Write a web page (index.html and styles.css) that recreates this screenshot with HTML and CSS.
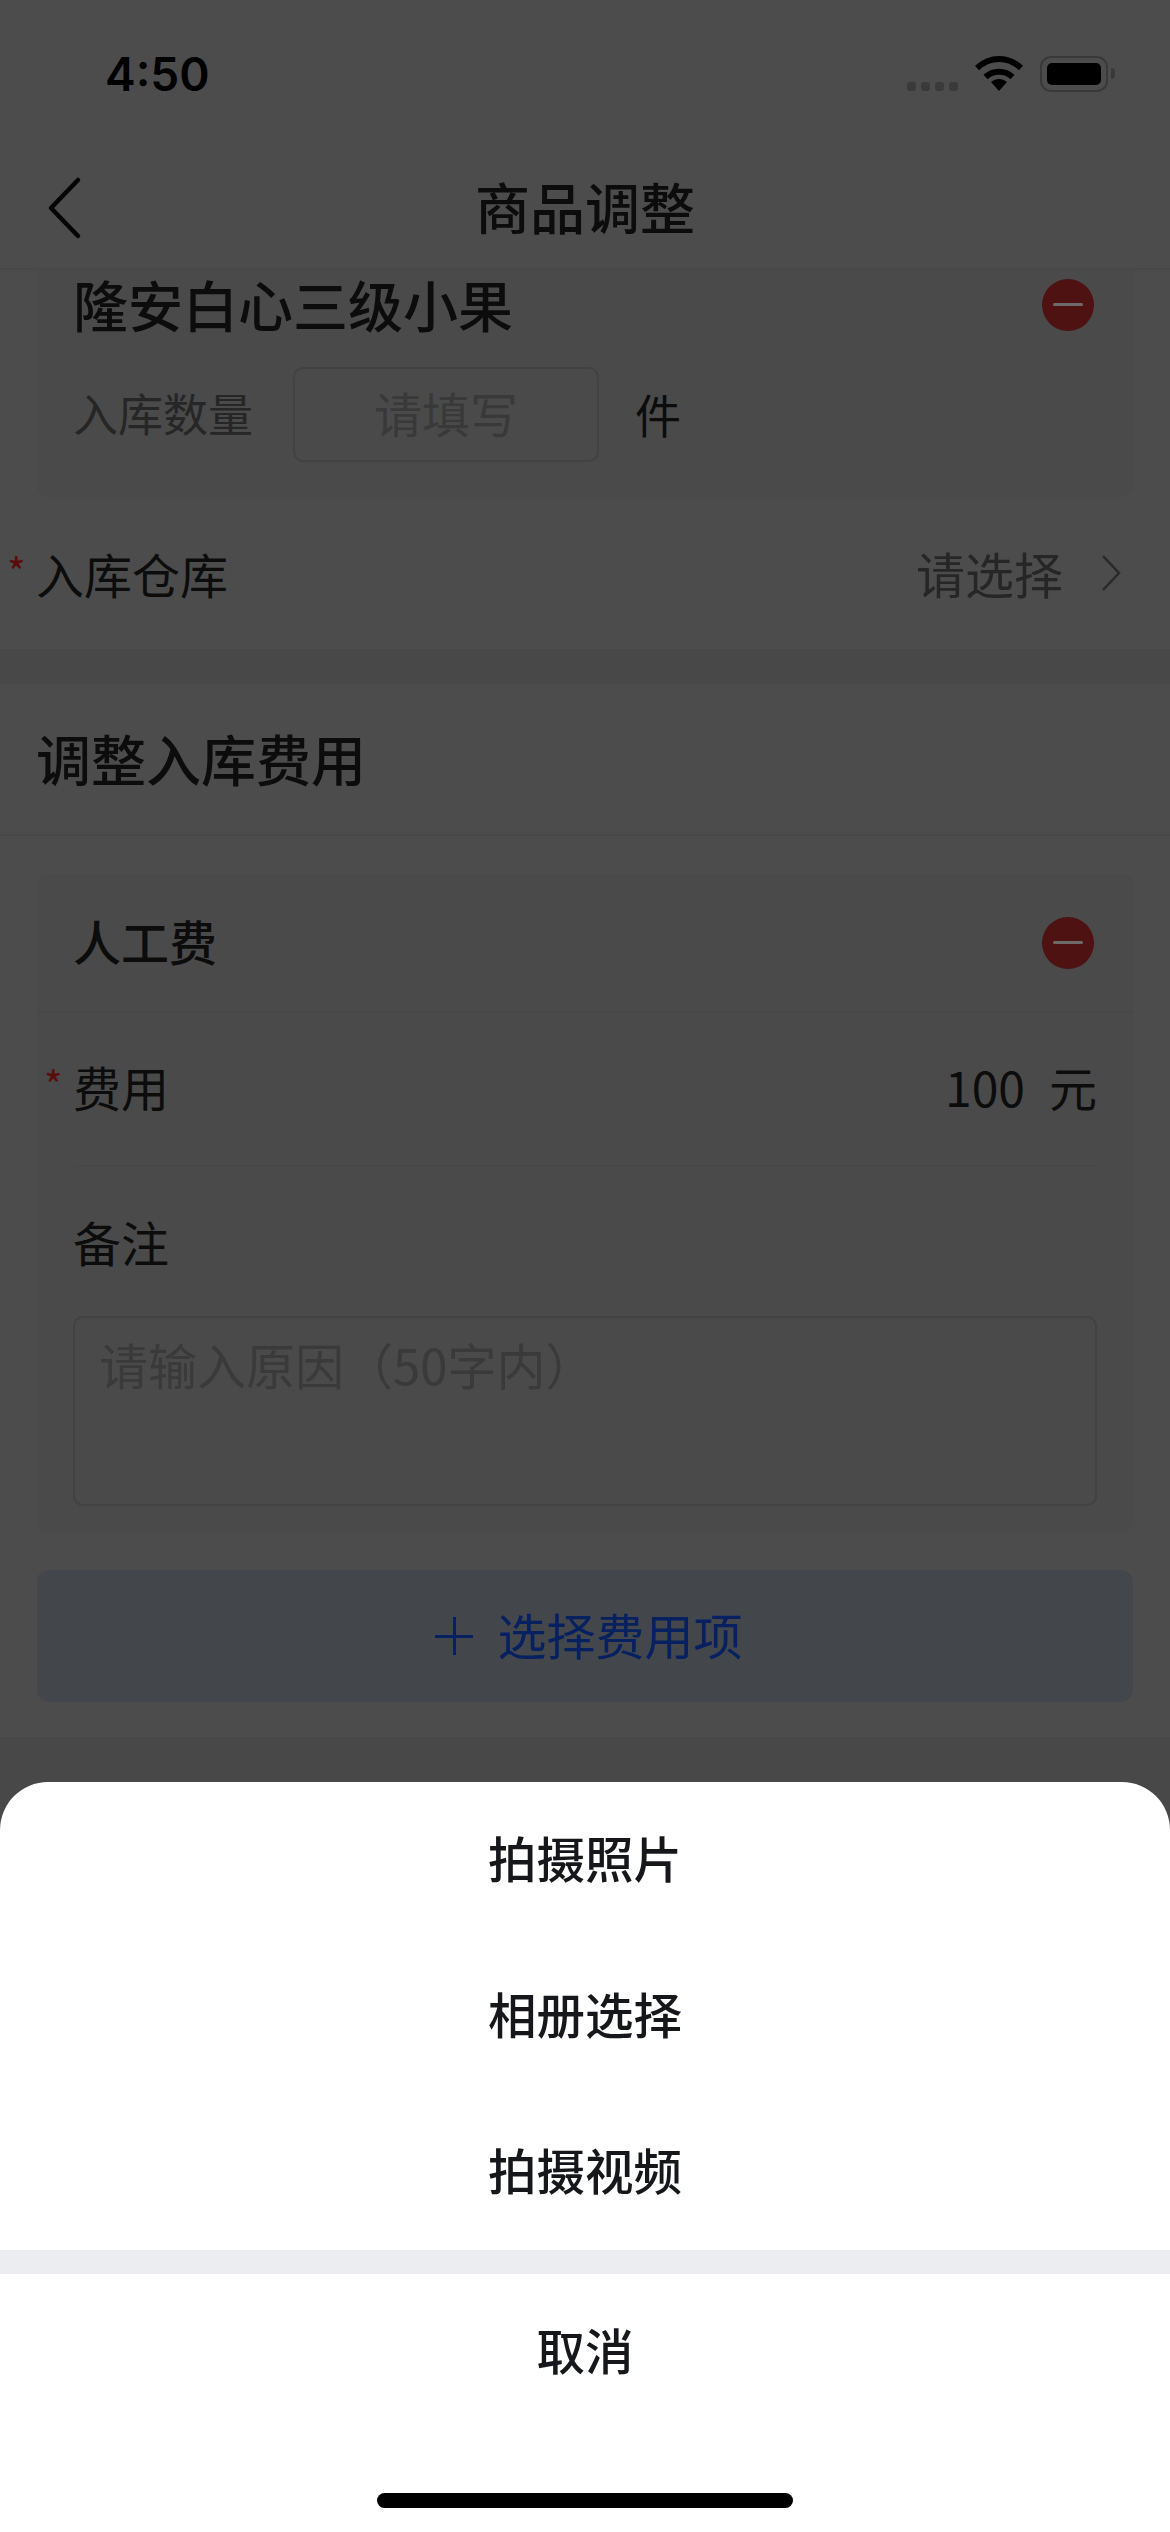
FILE: index.html
```html
<!DOCTYPE html>
<html lang="zh-CN">
<head>
<meta charset="UTF-8">
<meta name="viewport" content="width=device-width, initial-scale=1.0">
<title>商品调整</title>
<link rel="stylesheet" href="styles.css">
</head>
<body>
<div class="screen">
    <header class="top">
        <div class="status">
            <span class="time">4:50</span>
            <div class="status-icons">
                <div class="signal"><i></i><i></i><i></i><i></i></div>
                <svg class="wifi" width="48" height="37" viewBox="0 0 48 37">
                    <path d="M2 13 C15 1 33 1 46 13" fill="none" stroke="#000" stroke-width="6"/>
                    <path d="M10.500 22 C18 15 30 15 37.500 22" fill="none" stroke="#000" stroke-width="6"/>
                    <path d="M16 27 C21 23 27 23 32 27 L24 36 Z" fill="#000"/>
                </svg>
                <div class="battery"><div class="battery-fill"></div></div>
                <div class="battery-cap"></div>
            </div>
        </div>
        <nav class="nav">
            <svg class="back" width="36" height="64" viewBox="0 0 36 64">
                <path d="M31 4 L4 32 L31 60" fill="none" stroke="#050505" stroke-width="4.500" stroke-linecap="round" stroke-linejoin="round"/>
            </svg>
            <h1 class="nav-title">商品调整</h1>
        </nav>
    </header>

    <section class="block block-first">
        <div class="card card-cut">
            <div class="goods-head">
                <span class="goods-name">隆安白心三级小果</span>
                <span class="minus"></span>
            </div>
            <div class="qty-row">
                <span class="qty-label">入库数量</span>
                <div class="qty-input">请填写</div>
                <span class="qty-unit">件</span>
            </div>
        </div>
        <div class="pick-row">
            <span class="label"><em class="star">*</em>入库仓库</span>
            <span class="pick-value">请选择
                <svg class="arrow" width="20" height="38" viewBox="0 0 20 38">
                    <path d="M2 2 L18 19 L2 36" fill="none" stroke="#2a2a2a" stroke-width="2.500"/>
                </svg>
            </span>
        </div>
    </section>

    <section class="block">
        <h2 class="block-title">调整入库费用</h2>
        <div class="block-body">
            <div class="card">
                <div class="fee-head">
                    <span class="fee-name">人工费</span>
                    <span class="minus"></span>
                </div>
                <div class="fee-fields">
                    <div class="fee-row">
                        <span class="label"><em class="star">*</em>费用</span>
                        <span class="fee-value"><span>100</span><span>元</span></span>
                    </div>
                    <div class="note-label">备注</div>
                    <div class="note-box">请输入原因（50字内）</div>
                </div>
            </div>
            <div class="add-btn"><span class="plus"></span>选择费用项</div>
        </div>
    </section>

    <div class="sheet">
        <div class="sheet-item">拍摄照片</div>
        <div class="sheet-item">相册选择</div>
        <div class="sheet-item">拍摄视频</div>
        <div class="sheet-gap"></div>
        <div class="sheet-item">取消</div>
        <div class="home-bar"></div>
    </div>
</div>
</body>
</html>
```

FILE: styles.css
```css
* {
    box-sizing: border-box;
}
body {
    margin: 0;
    background-color: #484848;
    font-family: "Noto Sans CJK SC", "Noto Sans", sans-serif;
    color: #0c0c0c;
}
.screen {
    position: relative;
    width: 1170px;
    height: 2532px;
    overflow: hidden;
}

/* status bar + nav */
.top {
    height: 270px;
    background-color: #4c4c4c;
    border-bottom: 2px solid #484848;
}
.status {
    height: 176px;
    display: flex;
    justify-content: space-between;
    padding: 46px 55px 0 105px;
}
.time {
    font-family: Inter, "Noto Sans", sans-serif;
    font-size: 46px;
    font-weight: 600;
    line-height: 56px;
    color: #000;
}
.status-icons {
    display: flex;
    align-items: flex-start;
    padding-top: 9px;
}
.signal {
    display: flex;
    gap: 5px;
    margin-top: 27px;
    margin-right: 17px;
}
.signal i {
    width: 9px;
    height: 9px;
    border-radius: 3px;
    background-color: #3a3a3a;
}
.wifi {
    margin-right: 17px;
}
.battery {
    width: 68px;
    height: 36px;
    margin-top: 1px;
    padding: 5px;
    border: 2px solid #393939;
    border-radius: 11px;
}
.battery-fill {
    height: 100%;
    background-color: #000;
    border-radius: 5px;
}
.battery-cap {
    width: 4px;
    height: 11px;
    margin: 13px 0 0 3px;
    background-color: #393939;
    border-radius: 0 6px 6px 0;
}
.nav {
    height: 92px;
    padding-bottom: 35px;
    display: flex;
    align-items: center;
    justify-content: center;
    position: relative;
}
.back {
    position: absolute;
    left: 47px;
    top: 0;
}
.nav-title {
    margin: 0;
    font-size: 55px;
    font-weight: 500;
    line-height: 60px;
}

/* page blocks */
.block {
    background-color: #4c4c4c;
    margin-bottom: 35px;
}
.block-first {
    height: 379px;
}
.card {
    margin: 0 37px;
    background-color: #4a4a4a;
    border-radius: 12px;
}
.card-cut {
    height: 227px;
    border-radius: 0 0 12px 12px;
    padding: 0 39px 0 36px;
}
.goods-head {
    height: 70px;
    display: flex;
    align-items: center;
    justify-content: space-between;
}
.goods-name {
    font-size: 55px;
    font-weight: 500;
    line-height: 66px;
    margin-bottom: 4px;
}
.minus {
    position: relative;
    width: 52px;
    height: 52px;
    border-radius: 50%;
    background-color: #4f1212;
}
.minus::after {
    content: "";
    position: absolute;
    left: 11px;
    right: 11px;
    top: 24px;
    height: 3px;
    border-radius: 2px;
    background-color: #6f6a6a;
}
.qty-row {
    display: flex;
    align-items: center;
    margin-top: 27px;
    height: 95px;
}
.qty-label {
    width: 220px;
    margin-bottom: 4px;
    font-size: 45px;
    color: #262626;
}
.qty-input {
    width: 306px;
    height: 95px;
    border: 2px solid #424242;
    border-radius: 10px;
    font-size: 48px;
    line-height: 86px;
    text-align: center;
    color: #393939;
}
.qty-unit {
    margin-left: 36px;
    margin-bottom: 4px;
    font-size: 46px;
    color: #0c0c0c;
}
.pick-row {
    display: flex;
    align-items: center;
    justify-content: space-between;
    height: 151px;
    padding: 0 49px 0 36px;
}
.label {
    position: relative;
    font-size: 48px;
    line-height: 60px;
    color: #0c0c0c;
}
.star {
    position: absolute;
    left: -29px;
    top: -2px;
    font-size: 40px;
    font-style: normal;
    color: #5a0c0c;
}
.pick-value {
    display: flex;
    align-items: center;
    gap: 38px;
    font-size: 49px;
    color: #262626;
}

.block-title {
    margin: 0;
    height: 152px;
    padding: 0 36px;
    font-size: 55px;
    font-weight: 500;
    line-height: 146px;
    border-bottom: 2px solid #484848;
}
.block-body {
    padding: 38px 0 35px;
}
.fee-head {
    height: 139px;
    display: flex;
    align-items: center;
    justify-content: space-between;
    padding: 0 39px 0 36px;
    border-bottom: 2px solid #484848;
}
.fee-name {
    margin-bottom: 6px;
    font-size: 48px;
    font-weight: 500;
}
.fee-fields {
    padding: 0 36px 27px;
}
.fee-row {
    display: flex;
    align-items: center;
    justify-content: space-between;
    height: 154px;
    padding-bottom: 6px;
    border-bottom: 2px solid #484848;
}
.fee-value {
    display: flex;
    gap: 24px;
    font-size: 48px;
}
.note-label {
    height: 149px;
    font-size: 48px;
    line-height: 148px;
}
.note-box {
    height: 190px;
    padding: 16px 24px;
    border: 2px solid #424242;
    border-radius: 10px;
    font-size: 49px;
    line-height: 60px;
    color: #3a3a3a;
}
.add-btn {
    margin: 37px 37px 0;
    height: 132px;
    padding: 0 0 6px 8px;
    display: flex;
    align-items: center;
    justify-content: center;
    gap: 24px;
    border-radius: 12px;
    background-color: #43474c;
    font-size: 49px;
    color: #062060;
}
.plus {
    position: relative;
    width: 38px;
    height: 38px;
    margin-top: 6px;
}
.plus::before, .plus::after {
    content: "";
    position: absolute;
    background-color: #062060;
}
.plus::before {
    left: 0;
    right: 0;
    top: 18px;
    height: 3px;
}
.plus::after {
    top: 0;
    bottom: 0;
    left: 18px;
    width: 3px;
}

/* action sheet */
.sheet {
    position: absolute;
    left: 0;
    right: 0;
    top: 1782px;
    bottom: 0;
    background-color: #fff;
    border-radius: 48px 48px 0 0;
}
.sheet-item {
    height: 156px;
    font-size: 48.500px;
    font-weight: 500;
    line-height: 150px;
    text-align: center;
    color: #15171a;
}
.sheet-gap {
    height: 24px;
    background-color: #ecedf1;
}
.home-bar {
    position: absolute;
    left: 377px;
    bottom: 24px;
    width: 416px;
    height: 15px;
    border-radius: 8px;
    background-color: #000;
}
```
